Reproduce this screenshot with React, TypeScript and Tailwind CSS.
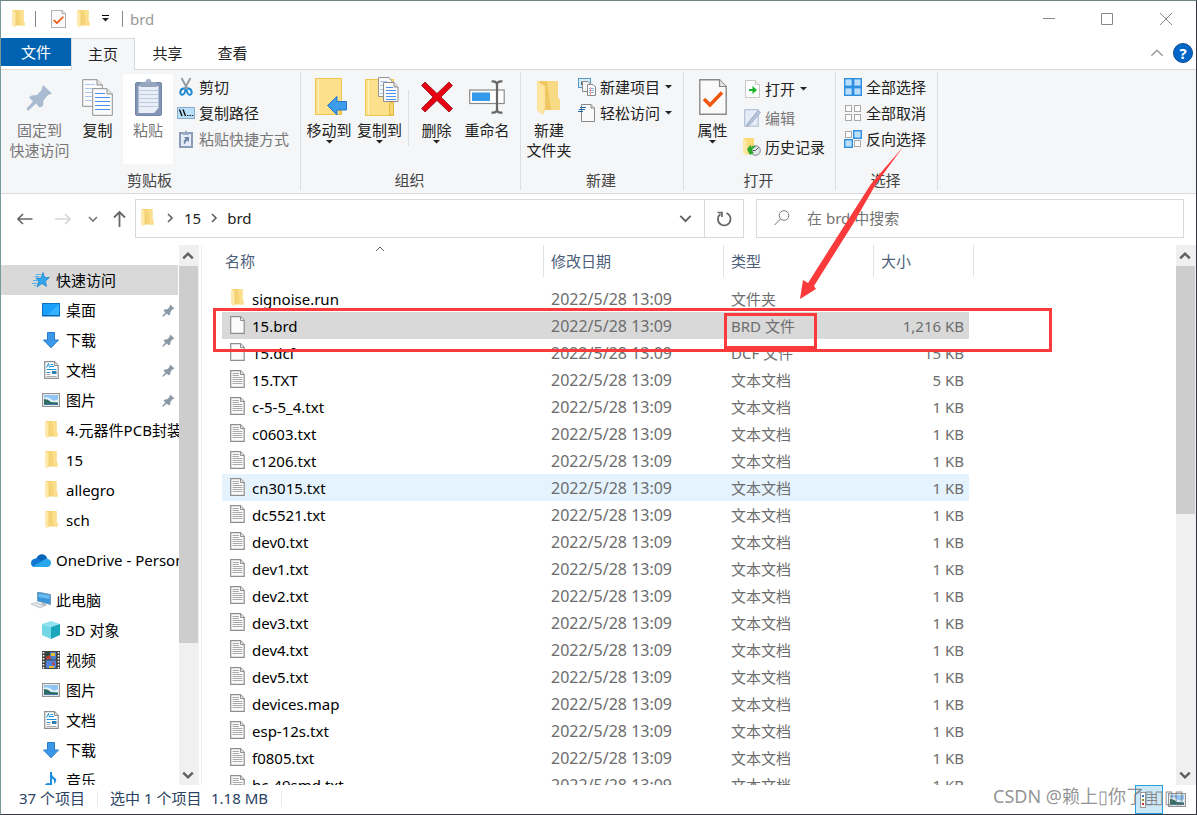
import type { ReactNode } from "react";

/* ---------- icons ---------- */

function Folder() {
  return (
    <svg width="13" height="18" viewBox="0 0 13 18">
      <path d="M1 0H11.500V11L12.500 12V15.500H2Z" fill="#f7d577" />
      <path d="M7 0h4.500v11l1 1v3.500H9Z" fill="#fbdf8d" />
      <path d="M0 0L4 2.500V15.500L3 17.500L0 15.500Z" fill="#ffe9ac" />
      <path d="M4 2.500V15.500" stroke="#e8c25c" strokeWidth=".6" />
    </svg>
  );
}

function CheckPage({ className = "w-[15px] h-[18px]" }: { className?: string }) {
  return (
    <svg className={className} viewBox="0 0 28 36" preserveAspectRatio="none">
      <path d="M.8.8H20.500L27.200 7.500V35.200H.8Z" fill="#fafafa" stroke="#8a8a8a" strokeWidth="1.400" />
      <path d="M20.500.8V7.500H27.200" fill="#e4e4e4" stroke="#8a8a8a" strokeWidth="1.200" />
      <path d="M5 20L11 26L23 13.500" fill="none" stroke="#f0560f" strokeWidth="3.400" />
    </svg>
  );
}

function Caret() {
  return (
    <svg width="7" height="4" viewBox="0 0 7 4">
      <path d="M0 0H7L3.500 3.500Z" fill="#222" />
    </svg>
  );
}

function Chevron({ dir, color = "#606060", size = 10, width = 1.6 }: { dir: "up" | "down" | "right"; color?: string; size?: number; width?: number }) {
  const d = { up: "M1 7L5 3L9 7", down: "M1 3L5 7L9 3", right: "M3 1L7 5L3 9" }[dir];
  return (
    <svg width={size} height={size} viewBox="0 0 10 10">
      <path d={d} fill="none" stroke={color} strokeWidth={width} />
    </svg>
  );
}

function Pushpin() {
  return (
    <svg width="27" height="27" viewBox="0 0 27 27">
      <path d="M17 1L26 9.500L22 11L17.500 16.500L17 22L13.500 23.500L10 19.500L2.500 26.500L.5 26L1.500 23.500L7 17.500L3 13.500L5.500 11.500L11 11L15.500 6Z" fill="#a9bad1" />
    </svg>
  );
}

function SmallPin() {
  return (
    <svg width="13" height="13" viewBox="0 0 27 27">
      <path d="M17 1L26 9.500L22 11L17.500 16.500L17 22L13.500 23.500L10 19.500L2.500 26.500L.5 26L1.500 23.500L7 17.500L3 13.500L5.500 11.500L11 11L15.500 6Z" fill="#8b99a6" />
    </svg>
  );
}

function CopyPages() {
  return (
    <svg width="31" height="37" viewBox="0 0 31 37">
      <path d="M.7.7H15L20.300 6V27.300H.7Z" fill="#fbfbfb" stroke="#8f8f8f" />
      <path d="M15 .7V6H20.300" fill="#e6e6e6" stroke="#8f8f8f" />
      <path d="M3 5.500H13M3 9.500H17M3 13.500H17M3 17.500H17M3 21.500H17" stroke="#a9c8f5" />
      <path d="M10.700 9.700H25L30.300 15V36.300H10.700Z" fill="#fbfbfb" stroke="#8f8f8f" />
      <path d="M25 9.700V15H30.300" fill="#e6e6e6" stroke="#8f8f8f" />
      <path d="M13 14.500H23M13 18.500H28M13 22.500H28M13 26.500H28M13 30.500H28" stroke="#4a90f0" strokeWidth="1.200" />
    </svg>
  );
}

function Clipboard() {
  return (
    <svg width="27" height="38" viewBox="0 0 27 38">
      <rect x=".5" y="4.500" width="26" height="33" rx="1.500" fill="#8395b5" stroke="#7486a8" />
      <path d="M3.500 8H23.500V30L19 35H3.500Z" fill="#e9eef7" />
      <path d="M4 12.500H23M4 16.500H23M4 20.500H23M4 24.500H23M4 28.500H23" stroke="#bccbe2" />
      <path d="M5 9V5.500Q5 4 7 4H10.500Q11 1 13.500 1T16.500 4H20Q22 4 22 5.500V9Z" fill="#95a5bf" />
      <circle cx="13.500" cy="3" r="2.200" fill="#a5b3c9" />
    </svg>
  );
}

function Scissors() {
  return (
    <svg width="14" height="18" viewBox="0 0 14 18">
      <path d="M2.500 0L8.500 11M11.500 0L5.500 11" stroke="#8e979e" strokeWidth="1.800" />
      <path d="M5.500 10.500Q2 10 1.300 14Q1.300 17 3.500 16.800Q6 16 6.500 11M8.500 10.500Q12 10 12.700 14Q12.700 17 10.500 16.800Q8 16 7.500 11" fill="none" stroke="#1e88d2" strokeWidth="2" />
    </svg>
  );
}

function CopyPath() {
  return (
    <svg width="18" height="12" viewBox="0 0 18 12">
      <rect x=".5" y=".5" width="17" height="11" fill="#b8e0fb" stroke="#8aaccb" />
      <path d="M2.500 2.500L5 9M6 2.500L8.500 9" stroke="#111" strokeWidth="1.400" />
      <path d="M10 8.500h1.400M12.400 8.500h1.400M14.800 8.500h1.400" stroke="#111" strokeWidth="1.200" />
    </svg>
  );
}

function PasteShortcut() {
  return (
    <svg width="14" height="18" viewBox="0 0 14 18">
      <rect x="1" y="3" width="12" height="14" fill="#e6ecf6" stroke="#8b9cba" strokeWidth="2" />
      <path d="M4 2.500H5.500L7 0L8.500 2.500H10V5H4Z" fill="#9cabc4" />
      <path d="M5 7H10V12L8.500 10.500Q6 11.500 6 14.500Q3 12 6.500 8.800Z" fill="#7086ab" />
    </svg>
  );
}

function MoveTo() {
  return (
    <svg width="32" height="38" viewBox="0 0 32 38">
      <rect x=".5" y=".5" width="26" height="36" fill="#fde08c" stroke="#ecc64f" />
      <path d="M3.500 1V36" stroke="#fff0bf" />
      <path d="M24 26Q24 23 27 23V35Q27 37 24 37Z" fill="#f0c64f" />
      <path d="M12.500 27.500L22 18.500V23.500H31.500V32H22V37Z" fill="#3c9bea" stroke="#2377c4" />
    </svg>
  );
}

function CopyTo() {
  return (
    <svg width="34" height="40" viewBox="0 0 34 40">
      <rect x=".5" y="2.500" width="28" height="36" fill="#fde08c" stroke="#ecc64f" />
      <path d="M3.500 3V38" stroke="#fff0bf" />
      <path d="M24.500 38V28Q24.500 25 27 25T28.500 28V38Z" fill="#f7d573" stroke="#e3b93e" />
      <path d="M13.500.5H24L27.500 5V19.500H13.500Z" fill="#f8f8f8" stroke="#959595" />
      <path d="M15 4.500h7M15 8.500h4M15 12.500h4M15 16.500h4" stroke="#a9c8f5" />
      <path d="M18.500 5.500H29L33 10V24.500H18.500Z" fill="#fbfbfb" stroke="#8b8b8b" />
      <path d="M29 5.500V10H33" fill="#e3e3e3" stroke="#8b8b8b" />
      <path d="M21 10.500h7M21 13.500h10M21 16.500h10M21 19.500h10M21 22.500h10" stroke="#4a90f0" />
    </svg>
  );
}

function Delete() {
  return (
    <svg width="32" height="32" viewBox="0 0 32 32">
      <path d="M4 1L16 12.500L28 1L31.500 4.500L20 16L31.500 27.500L28 31L16 19.500L4 31L.5 27.500L12 16L.5 4.500Z" fill="#e60012" stroke="#8c1018" strokeWidth=".8" />
    </svg>
  );
}

function Rename() {
  return (
    <svg width="36" height="34" viewBox="0 0 36 34">
      <rect x=".7" y="10" width="34.500" height="13.500" fill="#fff" stroke="#8b8b8b" strokeWidth="1.200" />
      <rect x="3" y="12.500" width="18" height="8.500" fill="#3399ea" />
      <path d="M22.500 1.500Q27 .5 28 4Q29 .5 33.500 1.500M22.500 32.500Q27 33.500 28 30Q29 33.500 33.500 32.500M28 3V31" fill="none" stroke="#666" strokeWidth="2.200" />
    </svg>
  );
}

function NewFolder() {
  return (
    <svg width="24" height="35" viewBox="0 0 24 35">
      <path d="M2 1H21V18L23 20V30H4Z" fill="#efc862" />
      <path d="M10 1H21V18L23 20V30H14Z" fill="#f8da84" />
      <path d="M0 1L8 6V29L6 34.500L0 30Z" fill="#ffe7a1" stroke="#f2d27a" strokeWidth=".5" />
    </svg>
  );
}

function NewItem() {
  return (
    <svg width="18" height="18" viewBox="0 0 18 18">
      <rect x=".5" y=".5" width="12" height="9" fill="#d5ebfa" stroke="#5598c4" />
      <path d="M3 7V3L7 7Z" fill="#3d7f6e" />
      <path d="M4.500 3.500H10L12.500 6V13.500H4.500Z" fill="#f7f7f7" stroke="#888" />
      <path d="M9.500 6.500H15L17.500 9V17.500H9.500Z" fill="#fff" stroke="#888" />
      <path d="M11 10.500h5M11 12.500h5M11 14.500h5" stroke="#8bb7e8" />
      <path d="M12.500 9v8" stroke="#f3a3a3" />
    </svg>
  );
}

function EasyAccess() {
  return (
    <svg width="18" height="18" viewBox="0 0 18 18">
      <path d="M3.500.5H13L16.500 4V17.500H3.500Z" fill="#fafafa" stroke="#888" />
      <path d="M13 .5V4H16.500" fill="#ddd" stroke="#888" />
      <path d="M2 3.500H8M1 5.500H7M0 7.500H5" stroke="#1f66a8" />
    </svg>
  );
}

function OpenPage() {
  return (
    <svg width="15" height="18" viewBox="0 0 15 18">
      <path d="M.5.5H10.500L14.500 4.500V17.500H.5Z" fill="#fdfdfd" stroke="#c8c8c8" />
      <path d="M10.500.5V4.500H14.500" fill="#eee" stroke="#c8c8c8" />
      <path d="M4 9H7.500V6L12 10L7.500 14V11H4Z" fill="#17b32c" />
    </svg>
  );
}

function EditPage() {
  return (
    <svg width="17" height="18" viewBox="0 0 17 18">
      <rect x=".7" y=".7" width="13.500" height="16.500" fill="#e5ecf7" stroke="#aab9d0" />
      <path d="M3 15L14 1.500L16.500 3.500L5.500 16L2.500 17Z" fill="#b6c4da" stroke="#8fa1bf" strokeWidth=".7" />
    </svg>
  );
}

function HistoryIcon() {
  return (
    <svg width="18" height="18" viewBox="0 0 18 18">
      <path d="M1 0H11V16H1Z" fill="#f9d978" />
      <path d="M0 0L4 3V18L0 15Z" fill="#ffe8a6" />
      <circle cx="12.500" cy="12.500" r="4.800" fill="#e3e8ea" stroke="#7b8489" />
      <path d="M12.500 12.500L15.500 9.500M12.500 12.500H9.500" stroke="#555" />
      <path d="M4 11L8 6.500V9Q12 7 13 9Q9 10 9 13L11 14.500L7 17Z" fill="#2ca82c" />
    </svg>
  );
}

function Tiles({ on }: { on: boolean[] }) {
  return (
    <svg width="18" height="18" viewBox="0 0 18 18">
      {on.map((blue, i) => {
        const x = (i % 2) * 9;
        const y = Math.floor(i / 2) * 9;
        return blue ? (
          <rect key={i} x={x + 0.7} y={y + 0.7} width="7.600" height="7.600" fill="#b9dffc" stroke="#2e8fe0" strokeWidth="1.400" />
        ) : (
          <rect key={i} x={x + 1.5} y={y + 1.5} width="6" height="6" fill="#fcfcfc" stroke="#a8a8a8" />
        );
      })}
    </svg>
  );
}

function PageIcon({ lines }: { lines?: boolean }) {
  return (
    <svg width="15" height="18" viewBox="0 0 15 18">
      <path d="M.7.700H10.500L14.200 4.500V17.300H.7Z" fill="#fbfbfb" stroke="#8e8e8e" strokeWidth="1.200" />
      <path d="M10.500.700V4.500H14.200" fill="#e5e5e5" stroke="#8e8e8e" />
      {lines && <path d="M2.500 3.500H9M2.500 5.500H9M2.500 7.500H12.500M2.500 9.500H12.500M2.500 11.500H12.500M2.500 13.500H12.500" stroke="#aaa" />}
    </svg>
  );
}

function QuickStar() {
  return (
    <svg width="18" height="16" viewBox="0 0 18 16">
      <path d="M11 .5L12.500 5.500H17.500L13.500 9L14.500 14.500L10 11.500L5 15L6.500 9.500L4 6H9Z" fill="#33a5ee" stroke="#1583cf" strokeWidth=".7" />
      <path d="M4 2.500H9M2.500 4.500H7M1 8.500H5M0 11.500H5M2 13.500H4" stroke="#59b2ec" />
    </svg>
  );
}

function Desktop() {
  return (
    <svg width="18" height="14" viewBox="0 0 18 14">
      <rect x=".5" y=".5" width="17" height="12.500" fill="#18a0fb" stroke="#0b73c4" />
      <path d="M17 1L5 12.500H17Z" fill="#37b4ff" />
      <path d="M1 12.500H17" stroke="#0862ad" />
    </svg>
  );
}

function DownArrow() {
  return (
    <svg width="18" height="17" viewBox="0 0 18 17">
      <path d="M5.500.5H12.500V8H16.500L9 15.800L1.500 8H5.500Z" fill="#3b98e8" stroke="#2a7ccb" />
    </svg>
  );
}

function Document() {
  return (
    <svg width="15" height="18" viewBox="0 0 15 18">
      <path d="M.7.700H10.500L14.200 4.500V17.300H.7Z" fill="#fff" stroke="#8e8e8e" strokeWidth="1.200" />
      <path d="M10.500.7V4.500H14.200" fill="#ddd" stroke="#8e8e8e" />
      <path d="M2.500 6.500L4.500 2.500L5.500 6.500M6.500 3.500H9M6 5.500H10M2.500 8.500H12.500M2.500 11.500H6.500" stroke="#1c92dd" fill="none" />
      <rect x="8" y="10" width="4.500" height="3" fill="#2f7fb5" />
      <path d="M2.500 13.500H6.500M2.500 15.500H12.500" stroke="#aaa" />
    </svg>
  );
}

function Picture() {
  return (
    <svg width="18" height="14" viewBox="0 0 18 14">
      <rect x=".6" y=".6" width="16.800" height="12.800" fill="#fff" stroke="#949494" strokeWidth="1.200" />
      <rect x="2" y="2" width="14" height="10" fill="#8fc4f3" />
      <path d="M2 5Q6 3 9 6T16 6V10H2Z" fill="#e1f0fb" />
      <path d="M2 6Q6 6 9 9L16 9.500V12H2Z" fill="#2f6b62" />
      <path d="M2 11H16V12H2Z" fill="#3c78a8" />
    </svg>
  );
}

function OneDrive() {
  return (
    <svg width="20" height="13" viewBox="0 0 20 13">
      <path d="M5 5Q7 0 11.500.3Q15 .6 16.200 4.500L10 8Z" fill="#0a64b8" />
      <path d="M0 9Q0 5.500 4 4.500Q6.500 4 9 5.800L14 9L5 13H4Q0 12.800 0 9Z" fill="#0f78d4" />
      <path d="M2 12.200L12 6.500Q14 4.300 16.500 4.800Q20 5.800 20 9T16.500 13H4Q3 13 2 12.200Z" fill="#28a8ea" />
    </svg>
  );
}

function ThisPc() {
  return (
    <svg width="20" height="17" viewBox="0 0 20 17">
      <path d="M6.500 0L19.500 2.500V12.500L6.500 9Z" fill="#3a96dd" stroke="#6f8fa8" strokeWidth=".8" />
      <path d="M7.500 1.500L18.500 3.500V7L7.500 5Z" fill="#6bbcf2" />
      <path d="M11 11L15 12V14L10 13Z" fill="#a7b0b8" />
      <path d="M0 12L5 10.500L14 13.500L9 16Z" fill="#dfe4e8" stroke="#a8b0b8" strokeWidth=".6" />
    </svg>
  );
}

function Cube() {
  return (
    <svg width="18" height="18" viewBox="0 0 18 18">
      <path d="M0 3L9 0L18 3L9 6Z" fill="#8fe3ef" />
      <path d="M0 3L9 6V18L0 14Z" fill="#74d7e6" />
      <path d="M18 3L9 6V18L18 14Z" fill="#1aa6bd" />
    </svg>
  );
}

function Film() {
  return (
    <svg width="18" height="18" viewBox="0 0 18 18">
      <rect width="18" height="18" fill="#444" />
      <rect x="4" y="1" width="10" height="7.500" fill="#4a7fd0" />
      <rect x="4" y="9.500" width="10" height="7.500" fill="#4f83e0" />
      <path d="M4 1h4v7.500H4Z" fill="#2c4a3a" />
      <path d="M4 6L8 4L9 8H4ZM11 10l2 4h-3Z" fill="#c63c2c" />
      <path d="M9 2h4v3H9ZM7 15h5v2H7Z" fill="#e9bd2f" />
      <path d="M1.500 1V18M16.500 1V18" stroke="#fff" strokeWidth="1.500" strokeDasharray="1.500 1.500" />
    </svg>
  );
}

function Music() {
  return (
    <svg width="18" height="18" viewBox="0 0 18 18">
      <path d="M9 1V14" stroke="#1b8fe0" strokeWidth="2" />
      <ellipse cx="6.500" cy="14.500" rx="3.500" ry="2.500" fill="#1b8fe0" />
      <path d="M9 1Q10 5 13 7T12 13Q13 8 9 7Z" fill="#1b8fe0" />
    </svg>
  );
}

/* ---------- ribbon ---------- */

function Group({ label, className, children }: { label: string; className: string; children: ReactNode }) {
  return (
    <section className={`flex shrink-0 flex-col border-r border-[#dcddde] pt-[2px] ${className}`}>
      <div className="flex h-24 items-start">{children}</div>
      <div className="pr-[2px] text-center text-[#444]">{label}</div>
    </section>
  );
}

function BigButton({ icon, lines, caret, disabled, className }: { icon: ReactNode; lines: string[]; caret?: boolean; disabled?: boolean; className: string }) {
  return (
    <button className={`flex shrink-0 flex-col items-center whitespace-nowrap ${disabled ? "text-[#777]" : "text-[#222]"} ${className}`}>
      <span className="flex h-[46px] items-center">{icon}</span>
      {lines.map((l) => (
        <span key={l}>{l}</span>
      ))}
      {caret && <Caret />}
    </button>
  );
}

function SmallButton({ icon, label, caret, disabled, tall }: { icon: ReactNode; label: string; caret?: boolean; disabled?: boolean; tall?: boolean }) {
  return (
    <button className={`flex items-center gap-1 whitespace-nowrap ${tall ? "h-[29px]" : "h-[26px]"} ${disabled ? "text-[#777]" : "text-[#222]"}`}>
      <span className="flex w-[18px] justify-center">{icon}</span>
      {label}
      {caret && <span className="ml-px"><Caret /></span>}
    </button>
  );
}

function Ribbon() {
  return (
    <div className="flex h-[125px] shrink-0 border-y border-[#d9dadc] bg-[#f5f6f7] pt-[2px] pb-[3px]">
      <Group label="剪贴板" className="w-[300px]">
        <BigButton icon={<Pushpin />} lines={["固定到", "快速访问"]} disabled className="ml-[3px] w-[71px]" />
        <BigButton icon={<CopyPages />} lines={["复制"]} className="w-[45px]" />
        <BigButton icon={<Clipboard />} lines={["粘贴"]} disabled className="ml-[3px] h-[90px] w-[50px] bg-white" />
        <div className="ml-1">
          <SmallButton icon={<Scissors />} label="剪切" />
          <SmallButton icon={<CopyPath />} label="复制路径" />
          <SmallButton icon={<PasteShortcut />} label="粘贴快捷方式" disabled />
        </div>
      </Group>
      <Group label="组织" className="w-[220px]">
        <BigButton icon={<span className="pl-1"><MoveTo /></span>} lines={["移动到"]} caret className="ml-[3px] w-[50px]" />
        <BigButton icon={<span className="pl-1"><CopyTo /></span>} lines={["复制到"]} caret className="w-[51px]" />
        <div className="mx-[3px] mt-4 h-14 w-px bg-[#dcddde]" />
        <BigButton icon={<Delete />} lines={["删除"]} caret className="w-[49px]" />
        <BigButton icon={<Rename />} lines={["重命名"]} className="w-[52px]" />
      </Group>
      <Group label="新建" className="w-[163px]">
        <BigButton icon={<NewFolder />} lines={["新建", "文件夹"]} className="ml-[3px] w-[50px]" />
        <div className="ml-1">
          <SmallButton icon={<NewItem />} label="新建项目" caret />
          <SmallButton icon={<EasyAccess />} label="轻松访问" caret />
        </div>
      </Group>
      <Group label="打开" className="w-[152px]">
        <BigButton icon={<CheckPage className="h-9 w-7" />} lines={["属性"]} caret className="ml-[6px] w-[45px]" />
        <div className="ml-2">
          <SmallButton icon={<OpenPage />} label="打开" caret tall />
          <SmallButton icon={<EditPage />} label="编辑" disabled tall />
          <SmallButton icon={<HistoryIcon />} label="历史记录" tall />
        </div>
      </Group>
      <Group label="选择" className="w-[102px]">
        <div className="ml-2">
          <SmallButton icon={<Tiles on={[true, true, true, true]} />} label="全部选择" />
          <SmallButton icon={<Tiles on={[false, false, false, false]} />} label="全部取消" />
          <SmallButton icon={<Tiles on={[false, true, true, false]} />} label="反向选择" />
        </div>
      </Group>
    </div>
  );
}

/* ---------- sidebar ---------- */

type NavItem = { icon: ReactNode; label: string; pinned?: boolean; top?: boolean; active?: boolean };

const navGroups: NavItem[][] = [
  [
    { icon: <QuickStar />, label: "快速访问", top: true, active: true },
    { icon: <Desktop />, label: "桌面", pinned: true },
    { icon: <DownArrow />, label: "下载", pinned: true },
    { icon: <Document />, label: "文档", pinned: true },
    { icon: <Picture />, label: "图片", pinned: true },
    { icon: <Folder />, label: "4.元器件PCB封装" },
    { icon: <Folder />, label: "15" },
    { icon: <Folder />, label: "allegro" },
    { icon: <Folder />, label: "sch" },
  ],
  [{ icon: <OneDrive />, label: "OneDrive - Personal", top: true }],
  [
    { icon: <ThisPc />, label: "此电脑", top: true },
    { icon: <Cube />, label: "3D 对象" },
    { icon: <Film />, label: "视频" },
    { icon: <Picture />, label: "图片" },
    { icon: <Document />, label: "文档" },
    { icon: <DownArrow />, label: "下载" },
    { icon: <Music />, label: "音乐" },
  ],
];

function Scrollbar({ thumb }: { thumb: string }) {
  return (
    <div className="flex w-5 shrink-0 flex-col bg-[#f0f0f0]">
      <button aria-label="向上滚动" className="flex h-[21px] shrink-0 items-center justify-center pr-[2px]">
        <Chevron dir="up" width={2} size={12} />
      </button>
      <div className="min-h-0 flex-1">
        <div className={`mr-px bg-[#cdcdcd] ${thumb}`} />
      </div>
      <button aria-label="向下滚动" className="flex h-[21px] shrink-0 items-center justify-center pr-[2px]">
        <Chevron dir="down" width={2} size={12} />
      </button>
    </div>
  );
}

function Sidebar() {
  return (
    <nav className="w-[178px] shrink-0 space-y-[10px] overflow-hidden pt-5 text-black">
      {navGroups.map((group, i) => (
        <ul key={i}>
          {group.map((item) => (
            <li key={item.label}>
              <a
                href="#"
                className={`flex h-[30px] items-center whitespace-nowrap ${item.top ? "pl-[29px]" : "pl-10"} ${item.active ? "mr-px bg-[#d9d9d9]" : ""}`}
              >
                <span className={`flex shrink-0 justify-center ${item.top ? "w-[22px]" : "w-5"}`}>{item.icon}</span>
                <span className={item.top ? "ml-1" : "ml-[5px]"}>{item.label}</span>
                {item.pinned && (
                  <span className="ml-auto pr-1">
                    <SmallPin />
                  </span>
                )}
              </a>
            </li>
          ))}
        </ul>
      ))}
    </nav>
  );
}

/* ---------- file list ---------- */

const text = "文本文档";

const files = [
  { name: "signoise.run", type: "文件夹", size: "" },
  { name: "15.brd", type: "BRD 文件", size: "1,216 KB" },
  { name: "15.dcf", type: "DCF 文件", size: "15 KB" },
  { name: "15.TXT", type: text, size: "5 KB" },
  { name: "c-5-5_4.txt", type: text, size: "1 KB" },
  { name: "c0603.txt", type: text, size: "1 KB" },
  { name: "c1206.txt", type: text, size: "1 KB" },
  { name: "cn3015.txt", type: text, size: "1 KB" },
  { name: "dc5521.txt", type: text, size: "1 KB" },
  { name: "dev0.txt", type: text, size: "1 KB" },
  { name: "dev1.txt", type: text, size: "1 KB" },
  { name: "dev2.txt", type: text, size: "1 KB" },
  { name: "dev3.txt", type: text, size: "1 KB" },
  { name: "dev4.txt", type: text, size: "1 KB" },
  { name: "dev5.txt", type: text, size: "1 KB" },
  { name: "devices.map", type: text, size: "1 KB" },
  { name: "esp-12s.txt", type: text, size: "1 KB" },
  { name: "f0805.txt", type: text, size: "1 KB" },
  { name: "hc-49smd.txt", type: text, size: "1 KB" },
];

const rowBg: Record<string, string> = {
  "15.brd": "bg-[#d9d9d9]",
  "cn3015.txt": "bg-[#e5f3ff]",
};

function FileList() {
  const th = "border-r border-[#e2e2e2] pl-[7px] text-left font-normal";
  return (
    <div className="min-w-0 flex-1 overflow-hidden border-l border-[#f0f0f0] pl-5">
      <table className="w-[752px] table-fixed border-separate border-spacing-0 text-[#6d6d6d]">
        <colgroup>
          <col className="w-[322px]" />
          <col className="w-[180px]" />
          <col className="w-[150px]" />
          <col className="w-[95px]" />
          <col className="w-[5px]" />
        </colgroup>
        <thead>
          <tr className="h-8 text-[#4c607a]">
            <th className="relative border-r border-[#e2e2e2] pl-[3px] text-left font-normal">
              名称
              <span className="absolute -top-px left-1/2 -ml-2">
                <Chevron dir="up" width={1} />
              </span>
            </th>
            <th className={th}>修改日期</th>
            <th className={th}>类型</th>
            <th className={th} colSpan={2}>大小</th>
          </tr>
          <tr className="h-2">
            <td colSpan={5} />
          </tr>
        </thead>
        <tbody>
          {files.map((f) => (
            <tr key={f.name} className={`h-[27px] ${rowBg[f.name] ?? ""}`}>
              <td className="p-0 text-black">
                <div className="flex items-center gap-[7px] pl-2">
                  <span className="flex w-[15px] justify-center pb-[2px]">
                    {f.type === "文件夹" ? <Folder /> : <PageIcon lines={f.type === text} />}
                  </span>
                  {f.name}
                </div>
              </td>
              <td className="p-0 pl-[7px] text-base leading-5">2022/5/28 13:09</td>
              <td className="p-0 pl-[7px]">{f.type}</td>
              <td className="p-0 pr-[5px] text-right">{f.size}</td>
            </tr>
          ))}
        </tbody>
      </table>
    </div>
  );
}

/* ---------- window ---------- */

function TitleBar() {
  return (
    <header className="flex h-[37px] shrink-0 items-center pb-[2px]">
      <div className="flex items-center pl-[11px]">
        <Folder />
        <span className="ml-[10px] h-4 w-px bg-[#888]" />
        <button aria-label="属性" className="ml-[15px]">
          <CheckPage />
        </button>
        <button aria-label="新建文件夹" className="ml-[11px]">
          <Folder />
        </button>
        <button aria-label="自定义快速访问工具栏" className="ml-3 w-[7px] border-t border-black pt-[2px]">
          <Caret />
        </button>
        <span className="ml-[13px] h-4 w-px bg-[#888]" />
        <h1 className="ml-[7px] text-[#999]">brd</h1>
      </div>
      <div className="ml-auto flex text-[#888]">
        <button aria-label="最小化" className="flex h-9 w-[58px] items-center justify-center">
          <svg width="12" height="12" viewBox="0 0 12 12" stroke="currentColor"><path d="M0 5.500H12" /></svg>
        </button>
        <button aria-label="最大化" className="flex h-9 w-[58px] items-center justify-center">
          <svg width="12" height="12" viewBox="0 0 12 12" fill="none" stroke="currentColor"><path d="M.5.500H11.500V11.500H.5Z" /></svg>
        </button>
        <button aria-label="关闭" className="flex h-9 w-[60px] items-center justify-center">
          <svg width="12" height="12" viewBox="0 0 12 12" stroke="currentColor"><path d="M0 0L12 12M12 0L0 12" /></svg>
        </button>
      </div>
    </header>
  );
}

function Tabs() {
  return (
    <div className="flex h-[31px] shrink-0 items-start text-[#222]">
      <button className="h-7 w-[70px] bg-[#0063b1] text-white">文件</button>
      <button className="relative h-8 w-16 border-x border-t border-[#d9dadc] bg-[#f5f6f7] pb-[2px]">主页</button>
      <button className="h-[31px] w-[65px] pb-[2px]">共享</button>
      <button className="h-[31px] w-[65px] pb-[2px]">查看</button>
      <div className="ml-auto flex h-[31px] items-center gap-[9px] pr-[3px] pb-[2px]">
        <button aria-label="折叠功能区">
          <Chevron dir="up" color="#999" size={14} width={1} />
        </button>
        <button aria-label="帮助" className="flex h-5 w-5 items-center justify-center rounded-full border border-[#0a4a90] bg-[#0067c8] font-bold text-white">
          ?
        </button>
      </div>
    </div>
  );
}

function AddressRow() {
  return (
    <div className="flex h-[51px] shrink-0 items-start pt-[5px] pr-3">
      <div className="flex h-[39px] w-[134px] shrink-0 items-center text-[#777]">
        <button aria-label="后退" className="ml-4">
          <svg width="16" height="12" viewBox="0 0 16 12" fill="none" stroke="#666" strokeWidth="1.600"><path d="M1 6H15.500M6 1L1 6L6 11" /></svg>
        </button>
        <button aria-label="前进" className="ml-[22px]">
          <svg width="16" height="12" viewBox="0 0 16 12" fill="none" stroke="#d6d6d6" strokeWidth="1.600"><path d="M0 6H15M10 1L15 6L10 11" /></svg>
        </button>
        <button aria-label="最近的位置" className="ml-[17px]">
          <Chevron dir="down" color="#777" />
        </button>
        <button aria-label="上移" className="ml-[15px]">
          <svg width="13" height="16" viewBox="0 0 13 16" fill="none" stroke="#666" strokeWidth="1.800"><path d="M6.500 1V16M1 6.500L6.500 1L12 6.500" /></svg>
        </button>
      </div>
      <div className="flex h-[39px] min-w-0 flex-1 items-center border border-[#d9d9d9]">
        <div className="flex items-center pb-[2px]">
          <span className="mr-[11px] ml-[5px]"><Folder /></span>
          <Chevron dir="right" />
          <a href="#" className="ml-[9px] text-[#222]">15</a>
          <span className="mx-2 flex"><Chevron dir="right" /></span>
          <a href="#" className="text-[#222]">brd</a>
        </div>
        <button aria-label="以前的位置" className="mr-3 ml-auto">
          <Chevron dir="down" size={13} width={1.5} />
        </button>
        <button aria-label="刷新" className="flex h-full w-[39px] items-center justify-center border-l border-[#d9d9d9]">
          <svg width="16" height="16" viewBox="0 0 16 16" fill="none" stroke="#666" strokeWidth="1.700">
            <path d="M10.500 2Q14.500 4 14.500 8A6.300 6.300 0 1 1 4.500 3M1.500 1.500H6V6" />
          </svg>
        </button>
      </div>
      <div className="ml-3 flex h-[39px] w-[428px] items-center border border-[#d9d9d9] pb-[2px]">
        <svg className="ml-[17px] shrink-0" width="16" height="16" viewBox="0 0 16 16" fill="none" stroke="#777">
          <circle cx="10" cy="5.500" r="4.800" />
          <path d="M6.500 9L.5 15" />
        </svg>
        <input aria-label="搜索" placeholder="在 brd 中搜索" className="ml-[17px] min-w-0 flex-1 outline-none placeholder:text-[#737373]" />
      </div>
    </div>
  );
}

function StatusBar() {
  return (
    <footer className="flex h-[29px] shrink-0 items-start leading-[27px] text-[#2a4263]">
      <span className="ml-[18px] w-[78px]">37 个项目</span>
      <span className="mt-[6px] h-4 w-px bg-[#e8e8e8]" />
      <span className="ml-3 w-[101px]">选中 1 个项目</span>
      <span className="w-[70px]">1.18 MB</span>
      <span className="mt-[6px] h-4 w-px bg-[#e8e8e8]" />
      <div className="ml-auto flex h-full items-center pr-[10px]">
        <button aria-label="详细信息" className="flex h-full w-7 items-center justify-center border border-[#26a0da] bg-[#cce8f6]">
          <svg width="18" height="16" viewBox="0 0 18 16">
            <rect x=".5" y=".5" width="5" height="15" fill="#fff" stroke="#999" />
            <path d="M2 3h2v2H2Z" fill="#2a78c0" />
            <path d="M2 7h2v2H2Z" fill="#87932d" />
            <path d="M2 11h2v2H2Z" fill="#c43020" />
            <path d="M7 2.500H17M7 5.500H17M7 8.500H17M7 12.500H17" stroke="#888" />
          </svg>
        </button>
        <button aria-label="大图标" className="ml-[5px]"><Picture /></button>
      </div>
    </footer>
  );
}

// Red callouts drawn over the window
function Annotations() {
  return (
    <div className="pointer-events-none">
      <div className="absolute top-[307px] left-[212px] h-11 w-[839px] border-3 border-[#fb3b3b]" />
      <div className="absolute top-[312px] left-[723px] h-9 w-[93px] border-3 border-[#fb3b3b]" />
      <svg className="absolute top-[145px] left-[797px]" width="106" height="154" viewBox="0 0 106 154">
        <path d="M105 1L73 38L48 77L10 137L5 134L2 153L18 143L16 140L55 78L78 38Z" fill="#fb3b3b" />
      </svg>
      <div className="absolute right-[12px] bottom-1 text-lg whitespace-nowrap text-[#777]/80">CSDN @赖上▯你了▯▯▯▯</div>
    </div>
  );
}

export default function App() {
  return (
    <div className="relative flex h-screen min-w-[1000px] flex-col overflow-hidden border border-t-[#6b8486] border-r-[#34343e] border-b-[#3a3a42] border-l-[#789a9b] bg-white font-['Noto_Sans','Noto_Sans_CJK_SC',sans-serif] text-[15px] leading-5">
      <TitleBar />
      <Tabs />
      <Ribbon />
      <AddressRow />
      <div className="flex min-h-0 flex-1">
        <Sidebar />
        <Scrollbar thumb="h-[377px]" />
        <div className="w-[2px] shrink-0" />
        <FileList />
        <Scrollbar thumb="h-[248px]" />
      </div>
      <StatusBar />
      <Annotations />
    </div>
  );
}
